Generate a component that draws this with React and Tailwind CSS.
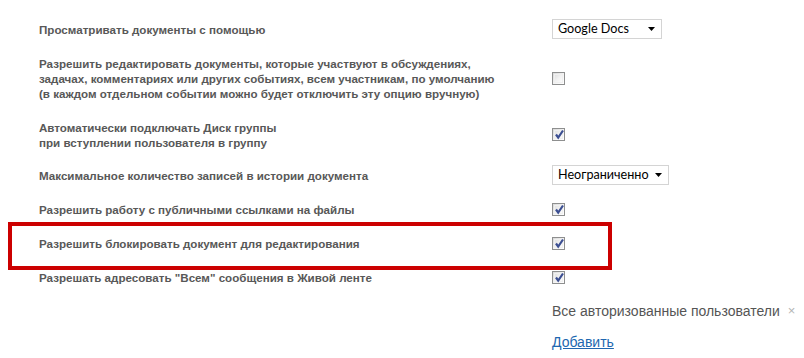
import { useState } from "react";

function Checkbox({ checked }) {
  return (
    <span className="relative inline-block w-[13px] h-[13px] border border-[#8e8f8f] bg-gradient-to-br from-[#d8d8d8] via-[#f2f2f2] to-[#ffffff]">
      <span className="absolute inset-[1px] border border-[#f0f0f0]" />
      {checked && (
        <svg className="absolute left-[1px] top-[0px]" width="11" height="11" viewBox="0 0 11 11">
          <path d="M2 5.5 L4.2 8.5 L9 1.5" fill="none" stroke="#3c4f92" strokeWidth="2.2" />
        </svg>
      )}
    </span>
  );
}

function Select({ value, width }) {
  return (
    <div
      className={`flex flex-none items-center justify-between h-[20px] border border-[#d4d4d4] bg-white pl-[5px] pr-[6px] ${width}`}
    >
      <span className="text-[12.6px] text-black leading-none whitespace-nowrap font-['Lato',sans-serif]">{value}</span>
      <svg className="flex-none" width="7" height="4" viewBox="0 0 7 4">
        <path d="M0 0 H7 L3.5 4 Z" fill="#000" />
      </svg>
    </div>
  );
}

const rows = [
  { h: "h-[34px]", label: ["Просматривать документы с помощью"], ctrl: <Select value="Google Docs" width="w-[110px]" /> },
  {
    h: "h-[64px]",
    label: [
      "Разрешить редактировать документы, которые участвуют в обсуждениях,",
      "задачах, комментариях или других событиях, всем участникам, по умолчанию",
      "(в каждом отдельном событии можно будет отключить эту опцию вручную)",
    ],
    ctrl: <Checkbox />,
  },
  {
    h: "h-[49px]",
    label: ["Автоматически подключать Диск группы", "при вступлении пользователя в группу"],
    ctrl: <Checkbox checked />,
  },
  { h: "h-[32px]", label: ["Максимальное количество записей в истории документа"], ctrl: <Select value="Неограниченно" width="w-[117px]" /> },
  { h: "h-[36px]", label: ["Разрешить работу с публичными ссылками на файлы"], ctrl: <Checkbox checked /> },
  { h: "h-[32px]", label: ["Разрешить блокировать документ для редактирования"], ctrl: <Checkbox checked /> },
  { h: "h-[36px]", label: ["Разрешать адресовать \"Всем\" сообщения в Живой ленте"], ctrl: <Checkbox checked /> },
];

export default function App() {
  const [hover, setHover] = useState(false);
  return (
    <div className="relative w-[804px] h-[358px] bg-white overflow-hidden pt-[12px] font-['Liberation_Sans',Arial,sans-serif]">
      {rows.map((r, i) => (
        <div key={i} className={`flex items-center ${r.h}`}>
          <div className="w-[552px] flex-none pl-[39px] text-[11.6px] leading-[15px] font-bold text-[#585858]">
            {r.label.map((l, j) => (
              <div key={j} className="whitespace-nowrap">{l}</div>
            ))}
          </div>
          <div className="flex items-center">{r.ctrl}</div>
        </div>
      ))}
      <div className="flex items-center h-[32px] pl-[552px]">
        <span className="text-[14px] text-[#555555] whitespace-nowrap">Все авторизованные пользователи</span>
        <span className="ml-[8px] text-[13px] text-[#b5b5b5]">×</span>
      </div>
      <div className="flex items-center h-[30px] pl-[552px]">
        <a
          href="#"
          onMouseEnter={() => setHover(true)}
          onMouseLeave={() => setHover(false)}
          className={`text-[14px] underline ${hover ? "text-[#0b4f9c]" : "text-[#2067b0]"}`}
        >
          Добавить
        </a>
      </div>
      <div className="absolute left-[8px] top-[222px] w-[604px] h-[48px] border-[4px] border-[#cc0000] pointer-events-none" />
    </div>
  );
}
